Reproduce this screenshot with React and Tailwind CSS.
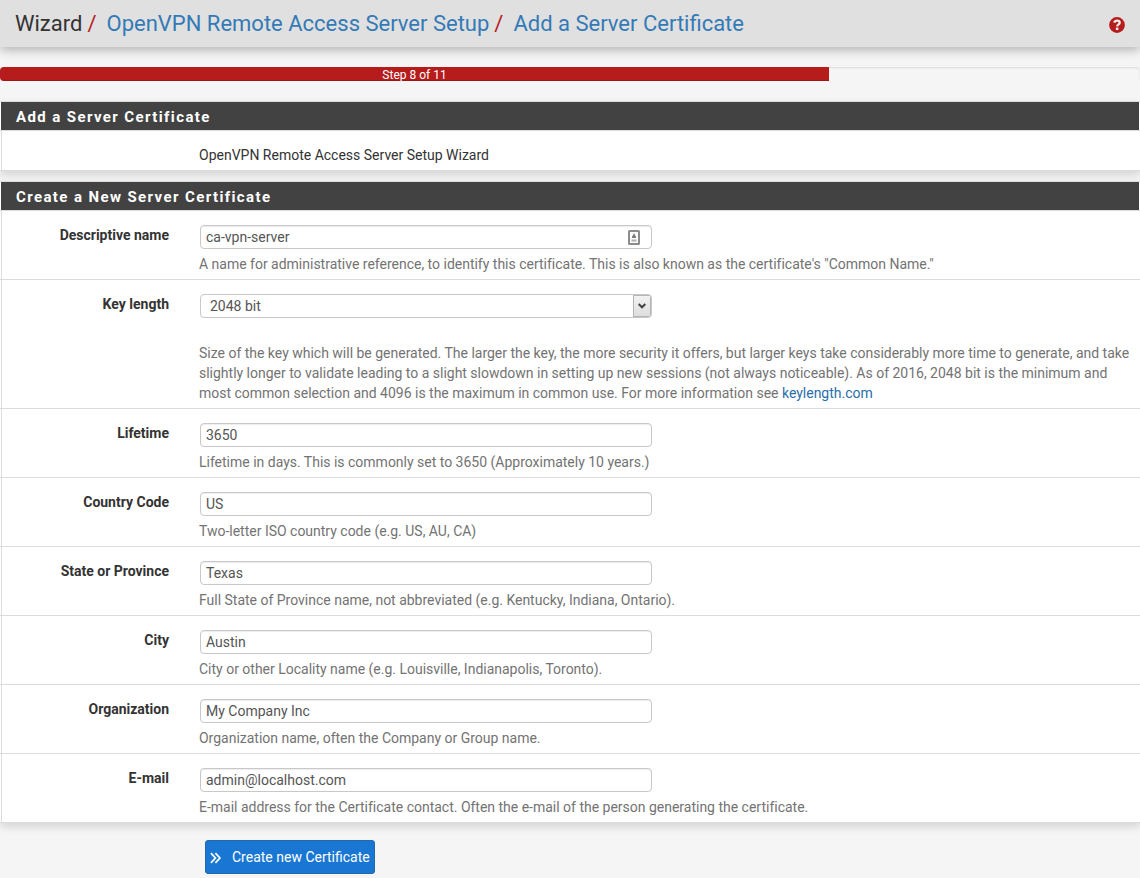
import React from "react";

function Help({ children, className = "" }) {
  return <p className={`whitespace-nowrap leading-5 tracking-[-0.008px] text-[#737373] ${className}`}>{children}</p>;
}

function Row({ label, children, className = "h-[69px]" }) {
  return (
    <div className={`border-b border-[#dcdcdc] pl-px ${className}`}>
      <div className="flex h-full border-l border-[#dcdcdc] pt-[14px]">
        <div className="w-[167px] shrink-0 text-right font-bold leading-5">{label}</div>
        <div className="ml-[30px] grow">{children}</div>
      </div>
    </div>
  );
}

function TextField({ value, children }) {
  return (
    <div className="ml-px flex h-6 w-[452px] items-center justify-between rounded-[4px] border border-[#c8c8c8] bg-white pl-[5px] pr-[11px] text-[#555] shadow-[inset_0_1px_1px_rgba(0,0,0,0.075)]">
      <span>{value}</span>
      {children}
    </div>
  );
}

function ContactIcon() {
  return (
    <svg width="12" height="15" viewBox="0 0 12 15">
      <rect x="1" y="1" width="10" height="13" rx="0.5" fill="#fafafa" stroke="#8c8c8c" strokeWidth="2" />
      <path d="M6 3l1.600 3.500H4.400z" fill="#777" />
      <rect x="4" y="6" width="4" height="2" fill="#808080" />
      <rect x="3.500" y="9.500" width="5" height="2" fill="#b0b0b0" />
    </svg>
  );
}

function PanelHeading({ children }) {
  return (
    <div className="border-y border-[#dcdcdc] px-px">
      <h2 className="h-7 bg-[#424242] pl-[15px] text-[15px] font-bold leading-[30px] tracking-[1.390px] text-white">{children}</h2>
    </div>
  );
}

const fields = [
  ["Lifetime", "3650", "Lifetime in days. This is commonly set to 3650 (Approximately 10 years.)"],
  ["Country Code", "US", "Two-letter ISO country code (e.g. US, AU, CA)"],
  ["State or Province", "Texas", "Full State of Province name, not abbreviated (e.g. Kentucky, Indiana, Ontario)."],
  ["City", "Austin", "City or other Locality name (e.g. Louisville, Indianapolis, Toronto)."],
  ["Organization", "My Company Inc", "Organization name, often the Company or Group name."],
  ["E-mail", "admin@localhost.com", "E-mail address for the Certificate contact. Often the e-mail of the person generating the certificate."],
];

export default function App() {
  return (
    <div className="h-[878px] overflow-hidden bg-[#f5f5f5] font-[Roboto,sans-serif] text-[14px] leading-5 text-[#333]">
      <header className="flex h-[47px] items-center justify-between bg-[#e0e0e0] pl-[15px] pr-[15px] shadow-[0_3px_10px_rgba(0,0,0,0.28)]">
        <h1 className="flex whitespace-nowrap text-[22px] leading-[47px] text-[#337ab7]">
          <span className="text-[#333]">Wizard</span>
          <span className="ml-[5px] text-[#b71c1c]">/</span>
          <span className="ml-[10px]">OpenVPN Remote Access Server Setup</span>
          <span className="ml-[5px] text-[#b71c1c]">/</span>
          <span className="ml-[10px]">Add a Server Certificate</span>
        </h1>
        <svg className="mt-[2px]" width="16" height="16" viewBox="0 0 16 16">
          <circle cx="8" cy="8" r="7.900" fill="#b71c1c" />
          <path d="M5.300 5.600C5.700 4.200 6.700 3.600 8 3.600c1.600 0 2.700.8 2.700 2.100 0 1.900-2.500 1.600-2.500 3.900" fill="none" stroke="#ececec" strokeWidth="2.300" />
          <rect x="6.900" y="10.600" width="2.500" height="2.400" fill="#ececec" />
        </svg>
      </header>

      <div className="mt-5 h-[14px] overflow-hidden rounded-[4px] bg-[#f5f5f5] shadow-[inset_0_1px_2px_rgba(0,0,0,0.1)]">
        <div className="h-full w-[829px] bg-[#b71c1c] text-center text-[12px] leading-4 text-white shadow-[inset_0_-1px_0_rgba(0,0,0,0.15)]">Step 8 of 11</div>
      </div>

      <section className="mt-5 bg-white shadow-[0_4px_8px_rgba(0,0,0,0.13)]">
        <PanelHeading>Add a Server Certificate</PanelHeading>
        <Row className="h-10">OpenVPN Remote Access Server Setup Wizard</Row>
      </section>

      <section className="mt-[10px] bg-white shadow-[0_4px_8px_rgba(0,0,0,0.13)]">
        <PanelHeading>Create a New Server Certificate</PanelHeading>
        <Row label="Descriptive name">
          <TextField value="ca-vpn-server"><ContactIcon /></TextField>
          <Help className="mt-[5px]">A name for administrative reference, to identify this certificate. This is also known as the certificate's "Common Name."</Help>
        </Row>
        <Row label="Key length" className="h-[129px]">
          <div className="ml-px flex h-6 w-[452px] items-center justify-between overflow-hidden rounded-[4px] border border-[#c8c8c8] pl-[9px] text-[#555]">
            <span>2048 bit</span>
            <span className="flex h-[22px] w-[18px] items-center justify-center border border-[#b5b5b5] bg-gradient-to-b from-[#f2f2f2] to-[#dedede]">
              <svg width="8" height="6" viewBox="0 0 8 6"><path d="M.7 1L4 4.300 7.300 1" fill="none" stroke="#444" strokeWidth="2" /></svg>
            </span>
          </div>
          <Help className="mt-[25px]">
            Size of the key which will be generated. The larger the key, the more security it offers, but larger keys take considerably more time to generate, and take<br />
            slightly longer to validate leading to a slight slowdown in setting up new sessions (not always noticeable). As of 2016, 2048 bit is the minimum and<br />
            most common selection and 4096 is the maximum in common use. For more information see <a className="text-[#2a6eab]">keylength.com</a>
          </Help>
        </Row>
        {fields.map(([label, value, help]) => (
          <Row key={label} label={label}>
            <TextField value={value} />
            <Help className="mt-[5px]">{help}</Help>
          </Row>
        ))}
      </section>

      <button className="ml-[205px] mt-[17px] flex h-[34px] w-[170px] items-center whitespace-nowrap rounded-[3px] border border-[#2468ac] bg-[#1976d2] pl-1 text-white">
        <svg className="mt-px" width="12" height="12" viewBox="0 0 12 12"><path d="M.9 1.200L5.400 6l-4.500 4.800M5.400 1.200L9.900 6l-4.500 4.800" fill="none" stroke="#fff" strokeWidth="1.700" /></svg>
        <span className="ml-[10px]">Create new Certificate</span>
      </button>
    </div>
  );
}
